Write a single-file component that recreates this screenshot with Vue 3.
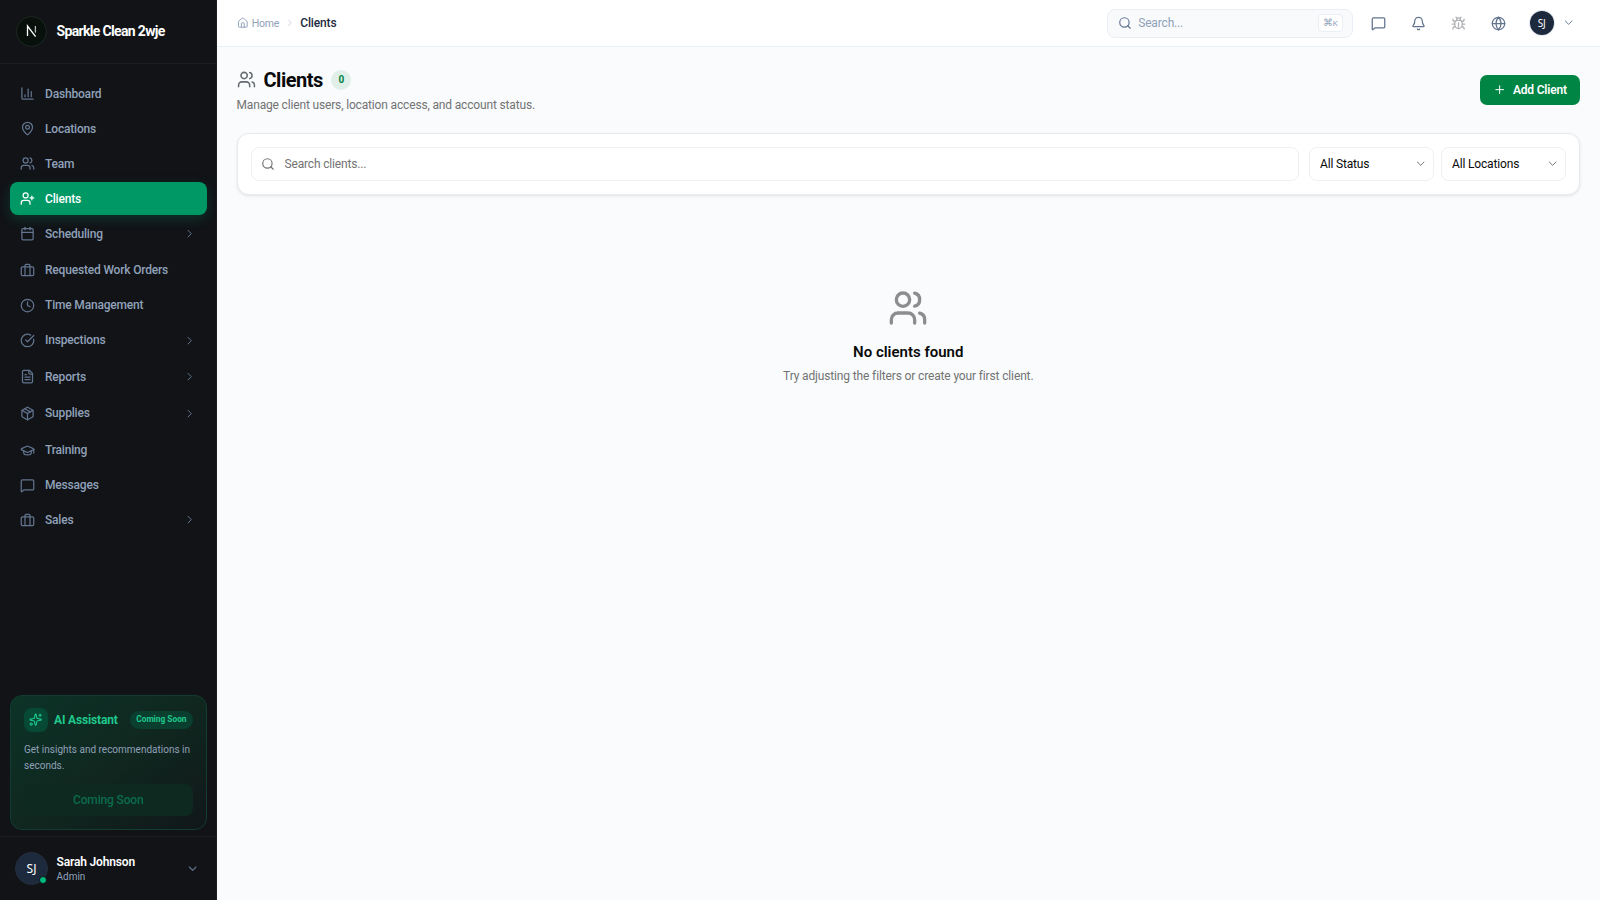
<script setup>
import { h } from 'vue'

const icons = {
  chart: '<path d="M3 3v16a2 2 0 0 0 2 2h16"/><path d="M18 17V9"/><path d="M13 17V5"/><path d="M8 17v-3"/>',
  pin: '<path d="M20 10c0 4.993-5.539 10.193-7.399 11.799a1 1 0 0 1-1.202 0C9.539 20.193 4 14.993 4 10a8 8 0 0 1 16 0"/><circle cx="12" cy="10" r="3"/>',
  users: '<path d="M16 21v-2a4 4 0 0 0-4-4H6a4 4 0 0 0-4 4v2"/><circle cx="9" cy="7" r="4"/><path d="M22 21v-2a4 4 0 0 0-3-3.87"/><path d="M16 3.13a4 4 0 0 1 0 7.75"/>',
  userPlus: '<path d="M16 21v-2a4 4 0 0 0-4-4H6a4 4 0 0 0-4 4v2"/><circle cx="9" cy="7" r="4"/><path d="M19 8v6"/><path d="M22 11h-6"/>',
  calendar: '<path d="M8 2v4"/><path d="M16 2v4"/><rect width="18" height="18" x="3" y="4" rx="2"/><path d="M3 10h18"/>',
  luggage: '<path d="M16 20V4a2 2 0 0 0-2-2h-4a2 2 0 0 0-2 2v16"/><rect width="20" height="14" x="2" y="6" rx="2"/>',
  clock: '<circle cx="12" cy="12" r="10"/><path d="M12 6v6l4 2"/>',
  check: '<path d="M21.801 10A10 10 0 1 1 17 3.335"/><path d="m9 11 3 3L22 4"/>',
  file: '<path d="M15 2H6a2 2 0 0 0-2 2v16a2 2 0 0 0 2 2h12a2 2 0 0 0 2-2V7Z"/><path d="M14 2v4a2 2 0 0 0 2 2h4"/><path d="M10 9H8"/><path d="M16 13H8"/><path d="M16 17H8"/>',
  box: '<path d="M11 21.73a2 2 0 0 0 2 0l7-4A2 2 0 0 0 21 16V8a2 2 0 0 0-1-1.73l-7-4a2 2 0 0 0-2 0l-7 4A2 2 0 0 0 3 8v8a2 2 0 0 0 1 1.73z"/><path d="M12 22V12"/><path d="M3.3 7 12 12l8.7-5"/><path d="m7.5 4.27 9 5.15"/>',
  cap: '<path d="M21.42 10.922a1 1 0 0 0-.019-1.838L12.83 5.18a2 2 0 0 0-1.66 0L2.6 9.08a1 1 0 0 0 0 1.832l8.57 3.908a2 2 0 0 0 1.66 0z"/><path d="M22 10v6"/><path d="M6 12.5V16a6 3 0 0 0 12 0v-3.5"/>',
  message: '<path d="M22 17a2 2 0 0 1-2 2H6.828a2 2 0 0 0-1.414.586l-2.202 2.202A.71.71 0 0 1 2 21.286V5a2 2 0 0 1 2-2h16a2 2 0 0 1 2 2z"/>',
  right: '<path d="m9 18 6-6-6-6"/>',
  down: '<path d="m6 9 6 6 6-6"/>',
  sparkles: '<path d="M11.017 2.814a1 1 0 0 1 1.966 0l1.051 5.558a2 2 0 0 0 1.594 1.594l5.558 1.051a1 1 0 0 1 0 1.966l-5.558 1.051a2 2 0 0 0-1.594 1.594l-1.051 5.558a1 1 0 0 1-1.966 0l-1.051-5.558a2 2 0 0 0-1.594-1.594l-5.558-1.051a1 1 0 0 1 0-1.966l5.558-1.051a2 2 0 0 0 1.594-1.594z"/><path d="M20 2v4"/><path d="M22 4h-4"/><circle cx="4" cy="20" r="2"/>',
  home: '<path d="M15 21v-8a1 1 0 0 0-1-1h-4a1 1 0 0 0-1 1v8"/><path d="M3 10a2 2 0 0 1 .709-1.528l7-6a2 2 0 0 1 2.582 0l7 6A2 2 0 0 1 21 10v9a2 2 0 0 1-2 2H5a2 2 0 0 1-2-2z"/>',
  search: '<circle cx="11" cy="11" r="8"/><path d="m21 21-4.3-4.3"/>',
  bell: '<path d="M10.268 21a2 2 0 0 0 3.464 0"/><path d="M3.262 15.326A1 1 0 0 0 4 17h16a1 1 0 0 0 .74-1.673C19.41 13.956 18 12.499 18 8A6 6 0 0 0 6 8c0 4.499-1.411 5.956-2.738 7.326"/>',
  bug: '<path d="M12 20v-9"/><path d="M14 7a4 4 0 0 1 4 4v3a6 6 0 0 1-12 0v-3a4 4 0 0 1 4-4z"/><path d="M14.12 3.88 16 2"/><path d="M21 21a4 4 0 0 0-3.81-4"/><path d="M21 5a4 4 0 0 1-3.55 3.97"/><path d="M22 13h-4"/><path d="M3 21a4 4 0 0 1 3.81-4"/><path d="M3 5a4 4 0 0 0 3.55 3.97"/><path d="M6 13H2"/><path d="m8 2 1.88 1.88"/><path d="M9 7.13V6a3 3 0 1 1 6 0v1.13"/>',
  globe: '<circle cx="12" cy="12" r="10"/><path d="M12 2a14.5 14.5 0 0 0 0 20 14.5 14.5 0 0 0 0-20"/><path d="M2 12h20"/>',
  plus: '<path d="M5 12h14"/><path d="M12 5v14"/>',
}

const Icon = (p) =>
  h('svg', {
    class: 'ic', viewBox: '0 0 24 24', width: p.s, height: p.s, fill: 'none', stroke: 'currentColor',
    'stroke-width': p.w || 2, 'stroke-linecap': 'round', 'stroke-linejoin': 'round', innerHTML: icons[p.n],
  })
Icon.props = ['n', 's', 'w']

const nav = [
  { t: 'Dashboard', i: 'chart' },
  { t: 'Locations', i: 'pin' },
  { t: 'Team', i: 'users' },
  { t: 'Clients', i: 'userPlus', active: true },
  { t: 'Scheduling', i: 'calendar', more: true },
  { t: 'Requested Work Orders', i: 'luggage' },
  { t: 'Time Management', i: 'clock' },
  { t: 'Inspections', i: 'check', more: true },
  { t: 'Reports', i: 'file', more: true },
  { t: 'Supplies', i: 'box', more: true },
  { t: 'Training', i: 'cap' },
  { t: 'Messages', i: 'message' },
  { t: 'Sales', i: 'luggage', more: true },
]
</script>

<template>
  <div class="app">
    <aside class="side">
      <div class="brand">
        <div class="logo">
          <svg width="14" height="14" viewBox="0 0 14 14" fill="none">
            <path d="M2.5 12V2L10.6 12.6" stroke="#fff" stroke-width="1.3" />
            <path d="M10.4 2v6.6" stroke="#b5b8b6" stroke-width="1.3" />
          </svg>
        </div>
        <span>Sparkle Clean 2wje</span>
      </div>
      <nav class="nav">
        <a v-for="n in nav" :key="n.t" class="item" :class="{ active: n.active, more: n.more }">
          <Icon :n="n.i" :s="15" />
          <span>{{ n.t }}</span>
          <Icon v-if="n.more" class="chev" n="right" :s="13.3" :w="1.8" />
        </a>
      </nav>
      <div class="ai">
        <div class="ai-head">
          <div class="ai-icon"><Icon n="sparkles" :s="13.3" /></div>
          <b>AI Assistant</b>
          <span class="pill">Coming Soon</span>
        </div>
        <p>Get insights and recommendations in seconds.</p>
        <div class="ai-btn">Coming Soon</div>
      </div>
      <div class="user">
        <div class="ava">SJ<i></i></div>
        <div class="who"><b>Sarah Johnson</b><span>Admin</span></div>
        <Icon n="down" :s="13.3" />
      </div>
    </aside>
    <div class="main">
      <header class="top">
        <div class="crumbs">
          <Icon n="home" :s="11.67" /><span class="home">Home</span>
          <Icon class="sep" n="right" :s="11.67" /><b>Clients</b>
        </div>
        <div class="search"><Icon n="search" :s="14" /><span>Search...</span><kbd>⌘<small>K</small></kbd></div>
        <div class="tools">
          <Icon n="message" :s="15" /><Icon n="bell" :s="15" /><Icon class="bug" n="bug" :s="15" /><Icon n="globe" :s="15" />
        </div>
        <div class="ava-s">SJ</div>
        <Icon class="caret" n="down" :s="13.3" :w="1.7" />
      </header>
      <main class="content">
        <div class="head">
          <div>
            <div class="title"><Icon n="users" :s="19" :w="1.9" /><h1>Clients</h1><span class="count">0</span></div>
            <p>Manage client users, location access, and account status.</p>
          </div>
          <button class="add"><Icon n="plus" :s="13.3" :w="1.8" /><span>Add Client</span></button>
        </div>
        <section class="filters">
          <div class="field"><Icon n="search" :s="14" /><span>Search clients...</span></div>
          <div class="sel"><span>All Status</span><Icon n="down" :s="13.3" :w="1.8" /></div>
          <div class="sel loc"><span>All Locations</span><Icon n="down" :s="13.3" :w="1.8" /></div>
        </section>
        <section class="empty">
          <Icon n="users" :s="40" />
          <h2>No clients found</h2>
          <p>Try adjusting the filters or create your first client.</p>
        </section>
      </main>
    </div>
  </div>
</template>

<style>
html, body { margin: 0; background: #f9fbfd; }
.ic { flex: none; display: block; }
</style>
<style scoped>
.app { display: flex; height: 900px; width: 1600px; overflow: hidden; font-family: Roboto, sans-serif; font-size: 12px; letter-spacing: -0.16px; box-sizing: border-box; }
.app * { box-sizing: border-box; }
p, h1, h2 { margin: 0; }
.side { width: 216.5px; flex: none; background: #111317; border-right: 1px solid #1b1d22; display: flex; flex-direction: column; }
.brand { height: 64px; border-bottom: 1px solid #1a1c21; display: flex; align-items: center; padding: 0 0 1px 16px; gap: 9.5px; color: #fff; font-size: 14px; font-weight: 700; letter-spacing: -0.66px; }
.logo { width: 31px; height: 31px; border-radius: 50%; background: #07100b; border: 1px solid #1f2924; display: flex; align-items: center; justify-content: center; }
.nav { padding: 13px 9px 0 10px; display: flex; flex-direction: column; gap: 1.67px; flex: 1; }
.item { height: 33.33px; border-radius: 8px; display: flex; align-items: center; padding: 0 10px; gap: 10px; font-weight: 500; letter-spacing: -0.18px; color: #90a1b9; }
.item .ic { color: #62748e; }
.item.more { margin-bottom: 1.67px; }
.item span { flex: 1; }
.item.active { background: #009966; color: #fff; box-shadow: 0 4px 12px rgba(0, 153, 102, .25); }
.item.active .ic { color: #fff; }
.ai { margin: 0 9px 6.5px 10px; height: 134.5px; border-radius: 12px; border: 1px solid #123c2f; background: linear-gradient(145deg, #0c3327 0%, #10261f 55%, #111719 100%); padding: 12px 13px; }
.ai-head { display: flex; align-items: center; color: #1fc98c; }
.ai-icon { width: 24px; height: 24px; border-radius: 8px; background: #064a36; display: flex; align-items: center; justify-content: center; margin-right: 6px; }
.ai-head b { font-weight: 700; flex: 1; }
.pill { height: 18px; padding: 0 6px; border-radius: 9px; background: #0a3f30; font-size: 8.33px; letter-spacing: 0; font-weight: 700; line-height: 17px; }
.ai p { font-size: 10px; letter-spacing: 0; line-height: 16px; color: #90a1b9; margin-top: 10px; }
.ai-btn { margin-top: 10px; height: 32px; border-radius: 8px; background: #0d2920; color: #0b6b4d; line-height: 32px; text-align: center; font-weight: 500; }
.user { height: 64px; border-top: 1px solid #1a1c21; display: flex; align-items: center; padding: 0 16px 0 15px; color: #62748e; }
.ava { width: 33px; height: 33px; border-radius: 50%; background: #1d293d; border: 1px solid #252e3f; color: #fff; font: 12px "Noto Sans", sans-serif; letter-spacing: 0; display: flex; align-items: center; justify-content: center; position: relative; margin-right: 8.5px; }
.ava i { position: absolute; right: 0; bottom: 0; width: 8px; height: 8px; border-radius: 50%; background: #00bc7d; border: 1px solid #111317; }
.who { flex: 1; display: flex; flex-direction: column; padding-top: 2px; }
.who b { line-height: 15px; color: #fff; font-weight: 600; }
.who span { font-size: 10px; letter-spacing: 0; line-height: 14px; color: #90a1b9; }
.main { flex: 1; display: flex; flex-direction: column; background: #f9fbfd; }
.top { height: 47px; background: #fff; border-bottom: 1px solid #e9eff5; display: flex; align-items: center; padding: 0 25px 0 20px; color: #62748e; }
.crumbs { flex: 1; display: flex; align-items: center; color: #90a1b9; font-size: 10.5px; letter-spacing: -0.2px; }
.home { margin: 0 4.5px 0 3.5px; }
.sep { color: #cad5e2; margin-right: 5px; }
.crumbs b { font-size: 12px; letter-spacing: -0.16px; font-weight: 500; color: #1d293d; }
.search { width: 246px; height: 29px; border: 1px solid #e9eff5; border-radius: 8px; background: #f8fafc; display: flex; align-items: center; padding: 0 9px 0 10px; gap: 6.5px; }
.search span { flex: 1; color: #90a1b9; }
kbd { width: 25px; height: 18px; border: 1px solid #e9eff5; border-radius: 4px; background: #fff; color: #90a1b9; font-family: Roboto, sans-serif; font-size: 10px; line-height: 15px; letter-spacing: 0; text-align: center; }
kbd small { font-size: 8px; }
.tools { display: flex; gap: 25px; margin: 0 24px 0 18px; }
.bug { color: #b0b2b5; }
.ava-s { width: 24px; height: 24px; border-radius: 50%; background: #1d293d; box-shadow: 0 0 0 1px #e2e8f0; color: #fff; font: 10px "Noto Sans", sans-serif; display: flex; align-items: center; justify-content: center; }
.caret { margin-left: 8px; }
.content { padding: 20px; }
.head { display: flex; justify-content: space-between; align-items: center; height: 46px; }
.title { display: flex; align-items: center; color: #666b70; height: 26px; }
h1 { font-size: 20px; font-weight: 700; color: #0a0a0a; margin: 0 8.5px 0 8px; letter-spacing: -0.5px; }
.count { width: 20px; height: 20px; border-radius: 50%; background: #e0f0e8; color: #008043; font-size: 10px; font-weight: 700; line-height: 20px; text-align: center; }
.head p { line-height: 17px; color: #737373; margin-top: 4px; }
.add { width: 100.5px; height: 30px; border: 0; border-radius: 7px; background: #008545; color: #fff; display: flex; align-items: center; justify-content: center; gap: 7px; font-family: Roboto, sans-serif; font-size: 12px; letter-spacing: -0.2px; font-weight: 600; }
.filters { margin-top: 20px; height: 61.5px; background: #fff; border: 1px solid #e9ebed; border-radius: 12px; box-shadow: 0 1px 3px rgba(0, 0, 0, .1); display: flex; align-items: center; padding: 0 13px; }
.field, .sel { height: 34px; border: 1px solid #eff0f1; border-radius: 8px; display: flex; align-items: center; padding: 0 9px; color: #737373; }
.field { flex: 1; gap: 10px; margin-right: 10px; }
.field span { padding-top: 1px; }
.sel { width: 125px; justify-content: space-between; padding: 0 6px 0 10px; }
.sel span { color: #0a0a0a; }
.loc { margin-left: 7px; }
.empty { display: flex; flex-direction: column; align-items: center; padding-top: 93px; color: #8b8d8f; letter-spacing: -0.14px; }
h2 { font-size: 15px; line-height: 22px; letter-spacing: 0; font-weight: 600; color: #0a0a0a; margin-top: 13.5px; }
.empty p { line-height: 17px; color: #737373; margin-top: 5px; }
</style>
